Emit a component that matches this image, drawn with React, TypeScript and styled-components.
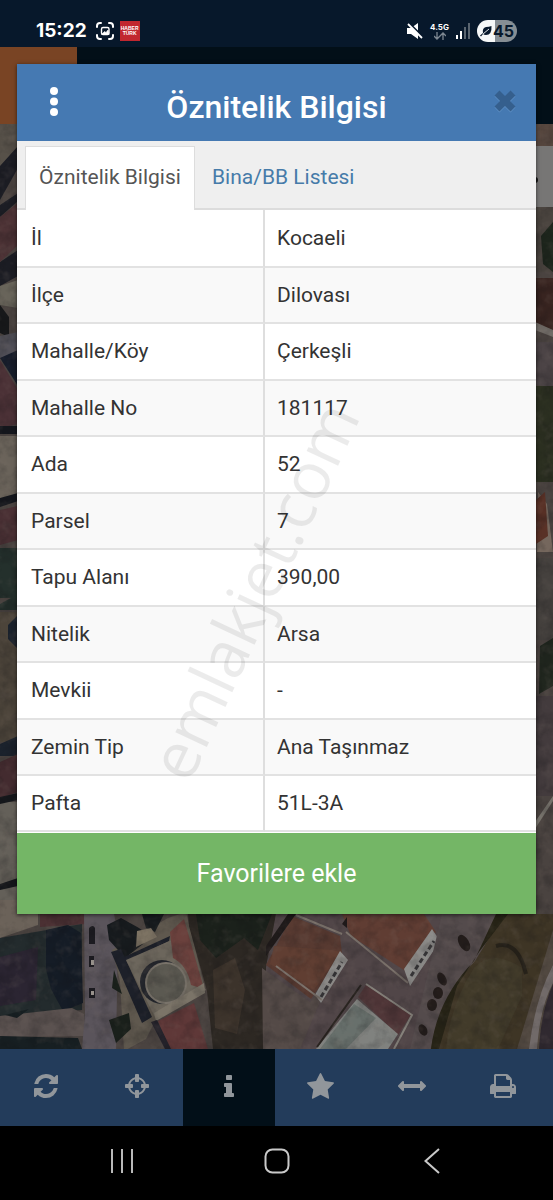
import React from "react";
import styled, { createGlobalStyle } from "styled-components";

const GlobalStyle = createGlobalStyle`
  *, *::before, *::after { box-sizing: border-box; }
  body { margin: 0; background: #000; font-family: Roboto, "Noto Sans", sans-serif; }
  button { font-family: inherit; border: 0; padding: 0; margin: 0; background: none; cursor: pointer; }
`;

const Screen = styled.div`
  position: relative;
  display: flex;
  flex-direction: column;
  min-height: 100vh;
  overflow: hidden;
`;

const StatusBar = styled.header`
  display: flex;
  align-items: center;
  justify-content: space-between;
  height: 47px;
  padding: 15px 36px 0;
  background: #07182b;
  color: #fff;
`;

const StatusGroup = styled.div<{ $gap: number }>`
  display: flex;
  align-items: center;
  gap: ${(p) => p.$gap}px;
`;

const Clock = styled.time`
  margin-right: 3px;
  font: 700 19px/24px Inter, sans-serif;
`;

const NewsBadge = styled.span`
  display: flex;
  flex-direction: column;
  align-items: center;
  justify-content: center;
  width: 20px;
  height: 20px;
  background: #c1272f;
  font: 700 5px/5px "Liberation Sans", sans-serif;
`;

const Network = styled.span`
  display: flex;
  flex-direction: column;
  align-items: center;
  font: 700 8px/9px Inter, sans-serif;
`;

const Battery = styled.span`
  display: flex;
  align-items: center;
  gap: 1px;
  width: 40px;
  height: 22px;
  padding-left: 3px;
  border-radius: 11px;
  background: linear-gradient(90deg, #f6f8f8 45%, #868e94 45%);
  color: #07182b;
  font: 700 16px/22px Inter, sans-serif;
`;

const AppBar = styled.div`
  height: 77px;
  background: linear-gradient(90deg, #794424 77px, #020f18 77px);
`;

const MapArea = styled.main`
  position: relative;
  flex: 1;
  min-height: 800px;
  background: #3c3634;
`;

const MapSvg = styled.svg`
  position: absolute;
  inset: 0;
  width: 100%;
  height: 100%;
`;

const MapControl = styled.div`
  position: absolute;
  top: 22px;
  right: 0;
  width: 28px;
  height: 61px;
  background: #777675;
`;

const Dialog = styled.section`
  position: absolute;
  top: 64px;
  left: 17px;
  right: 17px;
  background: #fff;
  box-shadow: 0 1px 4px rgba(0, 0, 0, 0.6);
`;

const DialogHeader = styled.div`
  display: grid;
  grid-template-columns: 74px 1fr 62px;
  align-items: center;
  height: 77px;
  background: #4579b2;
`;

const DialogTitle = styled.h1`
  margin: 0;
  padding: 8px 12px 0 0;
  color: #fff;
  text-align: center;
  font-size: 32px;
  line-height: 40px;
  font-weight: 500;
`;

const HeaderButton = styled.button`
  display: flex;
  align-items: center;
  justify-content: center;
  height: 77px;
  padding-bottom: 2px;
`;

const TabBar = styled.div`
  display: flex;
  align-items: stretch;
  height: 69px;
  padding: 5px 8px 0;
  background: #efefef;
  border-bottom: 2px solid #dcdcdc;
`;

const Tab = styled.button<{ $active?: boolean }>`
  height: ${(p) => (p.$active ? 64 : 62)}px;
  width: ${(p) => (p.$active ? "170px" : "auto")};
  margin-left: ${(p) => (p.$active ? 0 : 17)}px;
  padding-bottom: ${(p) => (p.$active ? 3 : 0)}px;
  background: ${(p) => (p.$active ? "#fff" : "transparent")};
  color: ${(p) => (p.$active ? "#555" : "#467ba9")};
  border: ${(p) => (p.$active ? "1px solid #ddd" : "0")};
  border-bottom: 0;
  font-size: 21px;
  line-height: 24px;
`;

const TableWrap = styled.div`
  position: relative;
  padding-bottom: 1px;
`;

const Table = styled.table`
  width: 100%;
  border-spacing: 0;
  table-layout: fixed;
  color: #333;
  font-size: 21px;
  line-height: 24px;
  text-align: left;
`;

const Row = styled.tr`
  height: 56px;
  &:nth-child(even) { background: #f9f9f9; }
  &:nth-child(odd) { height: 57px; }
  &:first-child { height: 58px; }
  &:last-child { height: 56px; }
`;

const Label = styled.th`
  width: 248px;
  padding: 0 14px 1px;
  font-weight: 400;
  border-bottom: 2px solid #e2e2e2;
  border-right: 2px solid #dedede;
`;

const Value = styled.td`
  padding: 0 12px 1px;
  border-bottom: 2px solid #e2e2e2;
`;

const Watermark = styled.div`
  position: absolute;
  inset: 0;
  display: flex;
  align-items: center;
  justify-content: center;
  padding-right: 48px;
  padding-top: 136px;
  pointer-events: none;

  span {
    transform: rotate(-65deg);
    color: rgba(0, 0, 0, 0.08);
    font: 400 65px/64px "Open Sans", sans-serif;
  }
`;

const FavouriteButton = styled.button`
  display: block;
  width: 100%;
  height: 81px;
  background: #74b666;
  color: #fff;
  font-size: 25px;
  line-height: 32px;
`;

const Toolbar = styled.nav`
  display: flex;
  height: 77px;
  padding-right: 4px;
  background: #233c5b;
`;

const Tool = styled.button<{ $active?: boolean }>`
  flex: 1;
  display: flex;
  align-items: center;
  justify-content: center;
  padding-bottom: 3px;
  background: ${(p) => (p.$active ? "#020f18" : "transparent")};
  color: #91969b;
`;

const SystemNav = styled.nav`
  display: grid;
  grid-template-columns: repeat(3, 1fr);
  height: 74px;
  padding: 0 44px;
  background: #000;
`;

const SystemButton = styled.button`
  display: flex;
  align-items: center;
  justify-content: center;
  padding-bottom: 4px;
`;

const rows: [string, string][] = [
  ["İl", "Kocaeli"],
  ["İlçe", "Dilovası"],
  ["Mahalle/Köy", "Çerkeşli"],
  ["Mahalle No", "181117"],
  ["Ada", "52"],
  ["Parsel", "7"],
  ["Tapu Alanı", "390,00"],
  ["Nitelik", "Arsa"],
  ["Mevkii", "-"],
  ["Zemin Tip", "Ana Taşınmaz"],
  ["Pafta", "51L-3A"],
];

const tools = [
  { name: "Yenile", w: 24, h: 24, box: "0 0 1536 1536", d: "M1511 928q0 5-1 7-64 268-268 434.500t-478 166.500q-146 0-282.500-55t-243.500-157l-129 129q-19 19-45 19t-45-19-19-45v-448q0-26 19-45t45-19h448q26 0 45 19t19 45-19 45l-137 137q71 66 161 102t187 36q134 0 250-65t186-179q11-17 53-117 8-23 30-23h192q13 0 22.500 9.500t9.500 22.500zm25-800v448q0 26-19 45t-45 19h-448q-26 0-45-19t-19-45 19-45l138-138q-148-137-349-137-134 0-250 65t-186 179q-11 17-53 117-8 23-30 23h-199q-13 0-22.500-9.500t-9.500-22.500v-7q65-268 270-434.500t480-166.500q146 0 284 55.500t245 156.500l130-129q19-19 45-19t45 19 19 45z" },
  { name: "Konum", w: 24, h: 24, box: "0 128 1536 1536", d: "M1197 1024h-109q-26 0-45-19t-19-45v-128q0-26 19-45t45-19h109q-32-108-112.500-188.500t-188.500-112.500v109q0 26-19 45t-45 19h-128q-26 0-45-19t-19-45v-109q-108 32-188.500 112.500t-112.500 188.500h109q26 0 45 19t19 45v128q0 26-19 45t-45 19h-109q32 108 112.500 188.500t188.500 112.500v-109q0-26 19-45t45-19h128q26 0 45 19t19 45v109q108-32 188.500-112.500t112.500-188.500zm339-192v128q0 26-19 45t-45 19h-143q-37 161-154.500 278.500t-278.500 154.500v143q0 26-19 45t-45 19h-128q-26 0-45-19t-19-45v-143q-161-37-278.500-154.500t-154.500-278.500h-143q-26 0-45-19t-19-45v-128q0-26 19-45t45-19h143q37-161 154.500-278.500t278.500-154.500v-143q0-26 19-45t45-19h128q26 0 45 19t19 45v143q161 37 278.500 154.500t154.500 278.500h143q26 0 45 19t19 45z" },
  { name: "Bilgi", active: true, w: 10, h: 24, box: "0 64 640 1536", d: "M640 1344v128q0 26-19 45t-45 19h-512q-26 0-45-19t-19-45v-128q0-26 19-45t45-19h64v-384h-64q-26 0-45-19t-19-45v-128q0-26 19-45t45-19h384q26 0 45 19t19 45v576h64q26 0 45 19t19 45zm-128-1152v192q0 26-19 45t-45 19h-256q-26 0-45-19t-19-45v-192q0-26 19-45t45-19h256q26 0 45 19t19 45z" },
  { name: "Favoriler", w: 27, h: 26, box: "0 32 1664 1600", d: "M1664 647q0 22-26 48l-363 354 86 500q1 7 1 20 0 21-10.500 35.500t-30.500 14.500q-19 0-40-12l-449-236-449 236q-22 12-40 12-21 0-31.500-14.500t-10.500-35.500q0-6 2-20l86-500-364-354q-25-27-25-48 0-37 56-46l502-73 225-455q19-41 49-41t49 41l225 455 502 73q56 9 56 46z" },
  { name: "Ölçüm", w: 28, h: 12, box: "0 576 1792 640", d: "M1792 896q0 26-19 45l-256 256q-19 19-45 19t-45-19-19-45v-128h-1024v128q0 26-19 45t-45 19-45-19l-256-256q-19-19-19-45t19-45l256-256q19-19 45-19t45 19 19 45v128h1024v-128q0-26 19-45t45-19 45 19l256 256q19 19 19 45z" },
  { name: "Yazdır", w: 26, h: 24, box: "0 0 1664 1536", d: "M384 1408h896v-256h-896v256zm0-640h896v-384h-160q-40 0-68-28t-28-68v-160h-640v640zm1152 64q0-26-19-45t-45-19-45 19-19 45 19 45 45 19 45-19 19-45zm128 0v416q0 13-9.500 22.500t-22.500 9.500h-224v160q0 40-28 68t-68 28h-960q-40 0-68-28t-28-68v-160h-224q-13 0-22.500-9.500t-9.500-22.500v-416q0-79 56.500-135.500t135.500-56.500h64v-544q0-40 28-68t68-28h672q40 0 88 20t76 48l152 152q28 28 48 76t20 88v256h64q79 0 135.500 56.500t56.500 135.500z" },
];

function SatelliteMap() {
  return (
    <MapSvg viewBox="0 124 553 925" preserveAspectRatio="xMidYMid slice" aria-hidden="true">
      <defs>
        <filter id="terrain" x="0" y="0" width="100%" height="100%" colorInterpolationFilters="sRGB">
          <feTurbulence type="fractalNoise" baseFrequency="0.07" numOctaves="4" seed="8" />
          <feColorMatrix values="0 0 0 0 0.06  0 0 0 0 0.06  0 0 0 0 0.07  2.6 0 0 0 -1.05" />
        </filter>
        <filter id="glints" x="0" y="0" width="100%" height="100%" colorInterpolationFilters="sRGB">
          <feTurbulence type="fractalNoise" baseFrequency="0.09" numOctaves="3" seed="23" />
          <feColorMatrix values="0 0 0 0 0.5  0 0 0 0 0.45  0 0 0 0 0.42  0 2.4 0 0 -1.2" />
        </filter>
        <filter id="soften" colorInterpolationFilters="sRGB"><feGaussianBlur stdDeviation="0.7" /></filter>
      </defs>
      <g filter="url(#soften)">
        <path fill="#4a4340" d="M0 124h553v925H0z" />

        {/* west edge */}
        <path fill="#575149" d="M0 124h18v42L0 186z" />
        <path fill="#1c1d24" d="M0 166l18-20v22L0 200zM0 205l18-12v8L0 217zM0 262l18-12v26L0 286z" />
        <path fill="#4e3336" d="M0 217l18-14v42L0 262z" />
        <path fill="#68645a" d="M0 286l18-6v28L0 305z" />
        <path fill="#17181a" d="M0 305l9 12 0 20-9-4z" />
        <path fill="#504f57" d="M0 336l18-4v24L0 358z" />
        <path fill="#171d2b" d="M0 358l18-8v36z" />
        <path fill="#4b3136" d="M0 360l18 30v34L0 428z" />
        <path fill="#6a635a" d="M0 436h18v62l-18 6z" />
        <path fill="#15171d" d="M0 426h18v8H0zM0 498l18-5v8l-18 6z" />
        <path fill="#4a3034" d="M0 510l18-4v34L0 545z" />
        <path fill="#24302c" d="M0 548h18v50H0zM0 604l18-10v16H0z" />
        <path fill="#4c443a" d="M0 612h18v130H0z" />
        <path fill="#1b222c" d="M8 625l10-10v34l-10-10zM0 744l18-8v20H0z" />
        <path fill="#432b2f" d="M0 762l18-8v38L0 798z" />
        <path fill="#646059" d="M0 802h18v112H0z" />
        <path fill="#15171b" d="M0 797l18-4v7l-18 4zM0 884l18-6v8l-18 4z" />

        {/* east edge */}
        <path fill="#57473f" d="M535 124h18v50h-18z" />
        <path fill="#49433e" d="M535 207h18v65h-18z" />
        <path fill="#1d251c" d="M541 236l12-14v50l-10-8z" />
        <path fill="#382420" d="M535 278h18v52l-18-6z" />
        <path fill="#706b66" d="M535 322l18 8v7l-18-7z" />
        <path fill="#4c4446" d="M535 342h18v46l-18-4z" />
        <path fill="#2c3021" d="M535 386h18v96h-18z" />
        <path fill="#75675d" d="M538 492l9 12 6 48h-16z" />
        <path fill="#593126" d="M536 500l9-8 3 44-12 8z" />
        <path fill="#45413e" d="M535 558h18v82h-18z" />
        <path fill="#20261e" d="M540 646l13-8v48l-14 8z" />
        <path fill="#433b3d" d="M535 696h18v100h-18z" />
        <path fill="#77736c" d="M535 822l18-26v5l-18 28z" />

        {/* car park and trees */}
        <path fill="#6b6259" d="M0 900h38v25L0 938z" />
        <path fill="#4b3033" d="M40 914h48v10l-48 3z" />
        <path fill="#232b2d" d="M0 938l82-14v86L0 1016z" />
        <path fill="#2b2532" d="M0 957l38-10-2 53L0 1006z" />
        <path fill="#151c26" d="M46 930l22-5 13 8 2 70-20 8-12-22-5-20z" />
        <path fill="#5b5250" d="M0 1016l72-8 12 6v22L0 1037z" />
        <path fill="#171f22" d="M5 1015l24-6-12 9zM0 1036l78 2 4 11H0z" />
        <path fill="#5a545b" d="M84 914h30l4 20-2 115H82l3-36z" />
        <path fill="#1c1b20" d="M89 928q4-4 6 0v16l-6 0zM89 956h5v11h-5zM89 988h6v10h-6z" />
        <path fill="#98928c" d="M91 960h3v5h-3zM91 991h3v4h-3z" />

        {/* round plaza */}
        <path fill="#5f584e" d="M112 950l56-32 18-6 19 77-49 30-10 20-22 12-4-70z" />
        <path fill="#171b1e" d="M107 925l14-7 18 10 8 6-4 10-18 14-16-18zM142 914h22l-9 18-9-4z" />
        <path fill="#1d2029" d="M111 952l10-3 31 68-10 6zM124 957l46-21-1 5-42 20z" />
        <path fill="#6c665c" d="M126 960l46-20 34 50-50 29z" />
        <circle cx="162" cy="982" r="22" fill="#24262c" />
        <circle cx="166" cy="983" r="21" fill="#79736a" />
        <circle cx="166" cy="983" r="19" fill="#5b5951" />
        <path fill="#7d7363" d="M137 931l14-3 6 9-21 10z" />
        <path fill="#6b413d" d="M170 932l14-13 20 70-13-4q-4-20-18-27z" />
        <path fill="#7b7468" d="M154 1013l50-30 1 10-49 28z" />
        <path fill="#5f3838" d="M158 1021l36-18 14 46h-40z" />
        <path fill="#24222a" d="M151 1022l6-2 14 29h-6z" />
        <path fill="#1a201b" d="M109 1020l20-7 2 16-15 14zM114 970l8 24-10-6z" />

        {/* scrub */}
        <path fill="#2d2823" d="M188 914h88l-9 60-4 75h-50l-6-58-18-65z" />
        <path fill="#1b211b" d="M196 914h76l-14 36-14-12-28 20-16-18z" />
        <path fill="#3c332b" d="M213 970l22-12 10 32-8 44-22-6z" />

        {/* warehouses */}
        <path fill="#514648" d="M276 914h226l-58 135H266v-82z" />
        <path fill="#544a47" d="M262 968l48 34 20-24-30 71h-37z" />
        <path fill="#583a31" d="M292 916l48 20 2 18-31 45-45-34z" />
        <path fill="#603e32" d="M270 964l44 26 26-38-8-2-58-4z" />
        <path fill="#603d33" d="M342 914h82l12 18-29 40-56-36z" />
        <path fill="#8d8c8a" d="M315 995l25-44 8 9-27 43zM404 969l28-40 8 12-30 45z" />
        <path fill="none" stroke="#373638" strokeWidth="3" strokeDasharray="5 3" d="M321 997l21-35M411 976l23-35" />
        <path fill="none" stroke="#7c736c" strokeWidth="2" d="M276 966l46 34M346 932l62 51M296 915l46 19M502 914l-18 18" />
        <path fill="#1f1a1a" d="M288 914h8l-30 42v-10zM342 924l5-7 0 11z" />
        <path fill="#503638" d="M358 997l8-12 45 30-13 20z" />
        <path fill="#80827f" d="M357 999l41 35-10 15h-72z" />
        <path fill="#68706c" d="M354 1004l22 14-30 31h-26z" />
        <path fill="none" stroke="#28231f" strokeWidth="2" d="M361 985l-44 62" />
        <path fill="none" stroke="#86827b" strokeWidth="2" d="M366 984l46 31-18 34" />
        <path fill="#544b4c" d="M442 914h60l-72 135h-20z" />
        <g fill="#241d1b">
          <ellipse cx="464" cy="943" rx="5" ry="9" transform="rotate(-30 464 943)" />
          <ellipse cx="442" cy="979" rx="4" ry="7" transform="rotate(-28 442 979)" />
          <ellipse cx="438" cy="993" rx="5" ry="6" />
          <ellipse cx="432" cy="1005" rx="5" ry="6" />
          <ellipse cx="423" cy="1030" rx="4" ry="6" transform="rotate(-28 423 1030)" />
        </g>

        {/* field and road */}
        <path fill="#3e3525" d="M504 914h49v90l-30 45h-92q8-50 44-88z" />
        <path fill="#262316" d="M496 914h12l-29 38-22 34-18 63h-8q6-50 43-88z" />
        <path fill="#423b2a" d="M474 968q18-20 48 0l0 28-24 53h-52q4-44 28-81z" />
        <path fill="none" stroke="#28231a" strokeWidth="4" d="M496 946q22-6 30 28" />
        <path fill="#514840" d="M553 930v119h-36z" />
        <path fill="#716a69" d="M553 965q-18 34-24 84h8q3-42 16-66z" />
        <path fill="#302930" d="M553 984v65h-14q2-38 14-65z" />
      </g>
      <path d="M0 124h553v925H0z" filter="url(#terrain)" opacity="0.2" />
      <path d="M0 124h553v925H0z" filter="url(#glints)" opacity="0.18" />
    </MapSvg>
  );
}

export default function App() {
  return (
    <Screen>
      <GlobalStyle />
      <StatusBar>
        <StatusGroup $gap={6}>
          <Clock>15:22</Clock>
          <svg width="18" height="18" viewBox="0 0 18 18" fill="none" stroke="#fff" strokeWidth="2" strokeLinecap="round">
            <path d="M1 5V4a3 3 0 0 1 3-3h1M13 1h1a3 3 0 0 1 3 3v1M17 13v1a3 3 0 0 1-3 3h-1M5 17H4a3 3 0 0 1-3-3v-1" />
            <rect x="5.500" y="5.500" width="7.500" height="7" rx="1.500" strokeWidth="1.400" />
            <path d="M6 12l2.500-2.500 1.500 1 2-2.500 1 4z" fill="#fff" strokeWidth="0.600" />
          </svg>
          <NewsBadge><span>HABER</span><span>TÜRK</span></NewsBadge>
        </StatusGroup>
        <StatusGroup $gap={7}>
          <svg width="16" height="16" viewBox="0 0 16 16">
            <path d="M0 5h4l7-5v16l-7-5H0z" fill="#fff" />
            <path d="M2 0l13 13" stroke="#07182b" strokeWidth="2" />
            <path d="M1 1l14 14" stroke="#fff" strokeWidth="1.800" />
          </svg>
          <Network>
            4.5G
            <svg width="12" height="8" viewBox="0 0 12 8" fill="none" stroke="#7d8791" strokeWidth="1.300">
              <path d="M3 0v7M0 4l3 3 3-3M9 8V1M6 4l3-3 3 3" />
            </svg>
          </Network>
          <svg width="14" height="16" viewBox="0 0 14 16">
            <path d="M0 12h2v4H0zM4 8h2v8H4z" fill="#fff" />
            <path d="M8 4h2v12H8zM12 0h2v16h-2z" fill="#59646f" />
          </svg>
          <Battery>
            <svg width="12" height="11" viewBox="0 0 12 11">
              <path d="M11.500 0Q12 9 6 9 4 9 3 8L1 10.500 0 9.500 3 7Q2 2 6 1 9 1 11.500 0z" fill="#07182b" />
              <path d="M3 8l6-5" stroke="#f6f8f8" strokeWidth="0.900" />
            </svg>
            45
          </Battery>
        </StatusGroup>
      </StatusBar>
      <AppBar />
      <MapArea>
        <SatelliteMap />
        <MapControl>
          <svg width="28" height="61" viewBox="0 0 28 61"><circle cx="10" cy="34" r="3" fill="#151515" /></svg>
        </MapControl>
      </MapArea>
      <Toolbar>
        {tools.map((t) => (
          <Tool key={t.name} $active={t.active} aria-label={t.name}>
            <svg width={t.w} height={t.h} viewBox={t.box} fill="currentColor"><path d={t.d} /></svg>
          </Tool>
        ))}
      </Toolbar>
      <SystemNav>
        <SystemButton aria-label="Son uygulamalar">
          <svg width="24" height="24" viewBox="0 0 24 24" stroke="#b9b9b9" strokeWidth="2"><path d="M2 0v24M12 0v24M22 0v24" /></svg>
        </SystemButton>
        <SystemButton aria-label="Ana ekran">
          <svg width="26" height="26" viewBox="0 0 26 26" fill="none" stroke="#c9c9c9" strokeWidth="2"><rect x="1.500" y="1.500" width="23" height="23" rx="7" /></svg>
        </SystemButton>
        <SystemButton aria-label="Geri">
          <svg width="16" height="26" viewBox="0 0 16 26" fill="none" stroke="#c9c9c9" strokeWidth="2"><path d="M15 1L1.500 13 15 25" /></svg>
        </SystemButton>
      </SystemNav>

      <Dialog role="dialog" aria-labelledby="dialog-title">
        <DialogHeader>
          <HeaderButton aria-label="Menü">
            <svg width="8" height="29" viewBox="0 0 8 29" fill="#fff">
              <circle cx="4" cy="4" r="4" /><circle cx="4" cy="14.500" r="4" /><circle cx="4" cy="25" r="4" />
            </svg>
          </HeaderButton>
          <DialogTitle id="dialog-title">Öznitelik Bilgisi</DialogTitle>
          <HeaderButton aria-label="Kapat">
            <svg width="24" height="25" viewBox="0 0 24 25" fill="none" strokeWidth="7" strokeLinejoin="round">
              <path d="M4 5l16 16M20 5L4 21" stroke="#5d8fc4" />
              <path d="M4 4l16 16M20 4L4 20" stroke="#355f8d" />
            </svg>
          </HeaderButton>
        </DialogHeader>
        <TabBar role="tablist">
          <Tab role="tab" aria-selected="true" $active>Öznitelik Bilgisi</Tab>
          <Tab role="tab" aria-selected="false">Bina/BB Listesi</Tab>
        </TabBar>
        <TableWrap>
          <Table>
            <tbody>
              {rows.map(([label, value]) => (
                <Row key={label}>
                  <Label scope="row">{label}</Label>
                  <Value>{value}</Value>
                </Row>
              ))}
            </tbody>
          </Table>
          <Watermark aria-hidden="true"><span>emlakjet.com</span></Watermark>
        </TableWrap>
        <FavouriteButton>Favorilere ekle</FavouriteButton>
      </Dialog>
    </Screen>
  );
}
